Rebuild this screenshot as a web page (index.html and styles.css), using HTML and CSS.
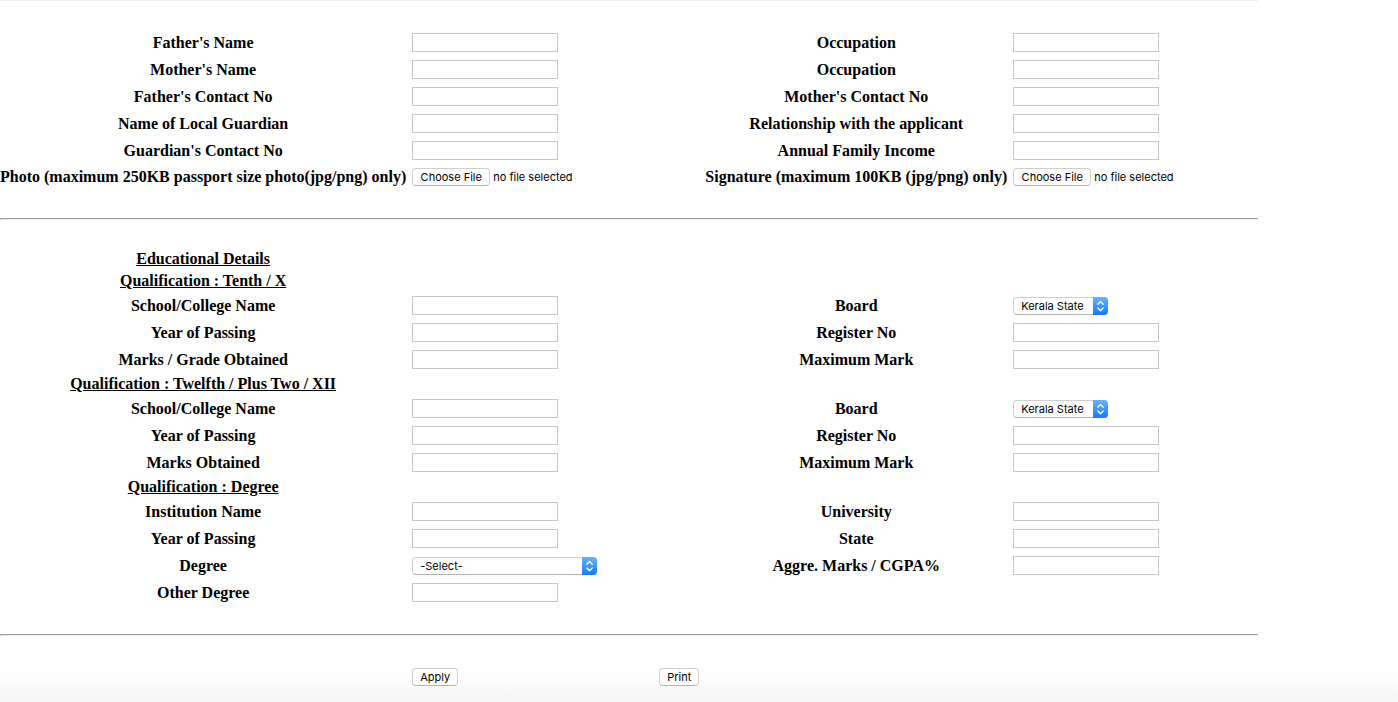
FILE: index.html
```html
<!DOCTYPE html>
<html lang="en">
<head>
<meta charset="utf-8">
<title>Application Form</title>
<link rel="stylesheet" href="styles.css">
</head>
<body>
<form class="form">
  <label class="name" for="father">Father's Name</label>
  <input class="field text" id="father" type="text">
  <label class="name right" for="father-job">Occupation</label>
  <input class="field right text" id="father-job" type="text">

  <label class="name" for="mother">Mother's Name</label>
  <input class="field text" id="mother" type="text">
  <label class="name right" for="mother-job">Occupation</label>
  <input class="field right text" id="mother-job" type="text">

  <label class="name" for="father-tel">Father's Contact No</label>
  <input class="field text" id="father-tel" type="text">
  <label class="name right" for="mother-tel">Mother's Contact No</label>
  <input class="field right text" id="mother-tel" type="text">

  <label class="name" for="guardian">Name of Local Guardian</label>
  <input class="field text" id="guardian" type="text">
  <label class="name right" for="relation">Relationship with the applicant</label>
  <input class="field right text" id="relation" type="text">

  <label class="name" for="guardian-tel">Guardian's Contact No</label>
  <input class="field text" id="guardian-tel" type="text">
  <label class="name right" for="income">Annual Family Income</label>
  <input class="field right text" id="income" type="text">

  <label class="name low" for="photo">Photo (maximum 250KB passport size photo(jpg/png) only)</label>
  <div class="field upload"><input class="file" id="photo" type="file"><span>no file selected</span></div>
  <label class="name right low" for="signature">Signature (maximum 100KB (jpg/png) only)</label>
  <div class="field right upload"><input class="file" id="signature" type="file"><span>no file selected</span></div>

  <hr class="rule">

  <h2 class="heading">Educational Details</h2>
  <h3 class="heading">Qualification : Tenth / X</h3>

  <label class="name" for="ten-school">School/College Name</label>
  <input class="field text" id="ten-school" type="text">
  <label class="name right" for="ten-board">Board</label>
  <div class="field right picker">
    <select class="select" id="ten-board"><option>Kerala State</option></select>
    <svg class="arrows" viewBox="0 0 15 18" aria-hidden="true"><path d="M4.8 7.2 7.5 4.5l2.7 2.7M4.8 11l2.7 2.7 2.7-2.7"/></svg>
  </div>

  <label class="name" for="ten-year">Year of Passing</label>
  <input class="field text" id="ten-year" type="text">
  <label class="name right" for="ten-reg">Register No</label>
  <input class="field right text" id="ten-reg" type="text">

  <label class="name" for="ten-marks">Marks / Grade Obtained</label>
  <input class="field text" id="ten-marks" type="text">
  <label class="name right" for="ten-max">Maximum Mark</label>
  <input class="field right text" id="ten-max" type="text">

  <h3 class="heading">Qualification : Twelfth / Plus Two / XII</h3>

  <label class="name" for="twelve-school">School/College Name</label>
  <input class="field text" id="twelve-school" type="text">
  <label class="name right" for="twelve-board">Board</label>
  <div class="field right picker">
    <select class="select" id="twelve-board"><option>Kerala State</option></select>
    <svg class="arrows" viewBox="0 0 15 18" aria-hidden="true"><path d="M4.8 7.2 7.5 4.5l2.7 2.7M4.8 11l2.7 2.7 2.7-2.7"/></svg>
  </div>

  <label class="name" for="twelve-year">Year of Passing</label>
  <input class="field text" id="twelve-year" type="text">
  <label class="name right" for="twelve-reg">Register No</label>
  <input class="field right text" id="twelve-reg" type="text">

  <label class="name" for="twelve-marks">Marks Obtained</label>
  <input class="field text" id="twelve-marks" type="text">
  <label class="name right" for="twelve-max">Maximum Mark</label>
  <input class="field right text" id="twelve-max" type="text">

  <h3 class="heading">Qualification : Degree</h3>

  <label class="name" for="institution">Institution Name</label>
  <input class="field text" id="institution" type="text">
  <label class="name right" for="university">University</label>
  <input class="field right text" id="university" type="text">

  <label class="name" for="degree-year">Year of Passing</label>
  <input class="field text" id="degree-year" type="text">
  <label class="name right" for="state">State</label>
  <input class="field right text" id="state" type="text">

  <label class="name" for="degree">Degree</label>
  <div class="field picker wide">
    <select class="select" id="degree"><option>-Select-</option></select>
    <svg class="arrows" viewBox="0 0 15 18" aria-hidden="true"><path d="M4.8 7.2 7.5 4.5l2.7 2.7M4.8 11l2.7 2.7 2.7-2.7"/></svg>
  </div>
  <label class="name right" for="aggregate">Aggre. Marks / CGPA%</label>
  <input class="field right text" id="aggregate" type="text">

  <label class="name" for="other-degree">Other Degree</label>
  <input class="field text" id="other-degree" type="text">

  <hr class="rule">

  <button class="field button" type="submit">Apply</button>
  <button class="print button" type="button">Print</button>
</form>
</body>
</html>
```
FILE: styles.css
```css
* {
  box-sizing: border-box;
}

body {
  margin: 0;
  min-height: 100vh;
  background: linear-gradient(to top, #f6f6f6, #fdfdfd 24px, #fff 44px) no-repeat #fff;
  color: #000;
  font-family: "Liberation Serif", "Times New Roman", serif;
  font-size: 16px;
}

.form {
  display: grid;
  grid-template-columns: max-content 60fr max-content max-content 61fr;
  gap: 2px 6px;
  align-items: center;
  width: 90%;
  padding: 29px 0 13px;
  border-top: 1px solid #eee;
}

.name {
  grid-column: 1;
  font-weight: bold;
  line-height: 25px;
  text-align: center;
}

.name.right {
  grid-column: 4;
}

.low {
  line-height: 24px;
}

.heading {
  grid-column: 1;
  margin: 0;
  font-size: 16px;
  line-height: 20px;
  text-align: center;
  text-decoration: underline;
}

.field {
  grid-column: 2;
  justify-self: start;
}

.field.right {
  grid-column: 5;
}

.print {
  grid-column: 3;
}

.text {
  width: 146px;
  height: 19px;
  padding: 1px 3px;
  border: 1px solid #c8c8c8;
  background: #fff;
  font: 11px Inter, sans-serif;
}

.rule {
  grid-column: 1 / -1;
  width: 100%;
  height: 2px;
  margin: 27px 0;
  border: 1px solid;
  border-color: #9a9a9a #eee #eee #9a9a9a;
}

.button,
.select,
.file::file-selector-button {
  height: 18px;
  margin: 0;
  padding: 0 7px;
  border: 1px solid #cfcfcf;
  border-bottom-color: #b4b4b4;
  border-radius: 4px;
  background: #fff;
  color: #000;
  font: 11px/16px Inter, sans-serif;
}

.button {
  margin: 3px 0;
}

.upload {
  display: flex;
  align-items: center;
  gap: 3px;
  font: 11px/18px Inter, sans-serif;
}

.file {
  width: 78px;
  height: 18px;
  color: transparent;
  font: 11px/16px Inter, sans-serif;
}

.file::file-selector-button {
  width: 78px;
}

.picker {
  position: relative;
  width: 95px;
}

.picker.wide {
  width: 185px;
}

.select {
  display: block;
  width: 100%;
  appearance: none;
}

.arrows {
  position: absolute;
  top: 0;
  right: 0;
  width: 15px;
  height: 18px;
  border-radius: 0 4px 4px 0;
  background: linear-gradient(#6bb3fa, #127bff);
  fill: none;
  stroke: #fff;
  stroke-width: 1.3;
  stroke-linecap: round;
  stroke-linejoin: round;
  pointer-events: none;
}
```
